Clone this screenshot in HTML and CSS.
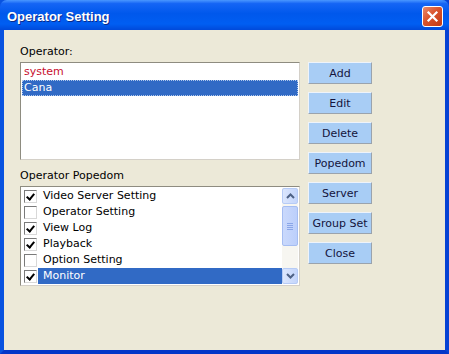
FILE: index.html
```html
<!DOCTYPE html>
<html lang="en">
<head>
    <meta charset="UTF-8">
    <title>Operator Setting</title>
    <link rel="stylesheet" href="styles.css">
</head>
<body>
    <div class="window">
        <div class="titlebar">
            <span class="title">Operator Setting</span>
            <span class="close-btn">
                <svg width="13" height="13" viewBox="0 0 13 13">
                    <path d="M2.5 2.5 L10.5 10.5 M10.5 2.5 L2.5 10.5" stroke="#fff" stroke-width="2.2" stroke-linecap="square"/>
                </svg>
            </span>
        </div>

        <div class="client">
            <div class="left-col">
                <div class="label">Operator:</div>
                <div class="listbox users">
                    <div class="row red">system</div>
                    <div class="row selected"><span>Cana</span></div>
                </div>

                <div class="label popedom-label">Operator Popedom</div>
                <div class="listbox perms">
                    <div class="rows">
                        <div class="row"><span class="check on"></span><span class="txt">Video Server Setting</span></div>
                        <div class="row"><span class="check"></span><span class="txt">Operator Setting</span></div>
                        <div class="row"><span class="check on"></span><span class="txt">View Log</span></div>
                        <div class="row"><span class="check on"></span><span class="txt">Playback</span></div>
                        <div class="row"><span class="check"></span><span class="txt">Option Setting</span></div>
                        <div class="row"><span class="check on"></span><span class="txt hl">Monitor</span></div>
                    </div>
                    <div class="scrollbar">
                        <div class="sb-btn">
                            <svg width="9" height="6" viewBox="0 0 9 6"><path d="M1 5 L4.5 1.5 L8 5" fill="none" stroke="#4d6185" stroke-width="2"/></svg>
                        </div>
                        <div class="sb-thumb">
                            <span></span><span></span><span></span><span></span>
                        </div>
                        <div class="sb-track"></div>
                        <div class="sb-btn">
                            <svg width="9" height="6" viewBox="0 0 9 6"><path d="M1 1 L4.5 4.5 L8 1" fill="none" stroke="#4d6185" stroke-width="2"/></svg>
                        </div>
                    </div>
                </div>
            </div>

            <div class="buttons">
                <button>Add</button>
                <button>Edit</button>
                <button>Delete</button>
                <button>Popedom</button>
                <button>Server</button>
                <button>Group Set</button>
                <button>Close</button>
            </div>
        </div>
    </div>
</body>
</html>
```

FILE: styles.css
```css
html, body {
    margin: 0;
    padding: 0;
}
body {
    width: 449px;
    height: 354px;
    overflow: hidden;
    font-family: "DejaVu Sans", "Liberation Sans", sans-serif;
    font-size: 11px;
}
.window {
    width: 449px;
    height: 354px;
    box-sizing: border-box;
    display: flex;
    flex-direction: column;
    background: #0a4fe0;
    border-left: 4px solid #0852e0;
    border-right: 4px solid #0642d4;
    border-bottom: 4px solid #0336c8;
}
.titlebar {
    height: 30px;
    margin: 0 -4px;
    padding: 0 6px 0 7px;
    display: flex;
    align-items: center;
    justify-content: space-between;
    background: linear-gradient(to bottom, #4a97ff 0, #1565f5 12%, #0058ec 45%, #005ef2 80%, #0049da 100%);
    border-radius: 7px 7px 0 0;
}
.title {
    color: #fff;
    font-family: "Liberation Sans", sans-serif;
    font-weight: bold;
    font-size: 13px;
    text-shadow: 1px 1px 0 #0a2a8a;
    margin-top: 2px;
}
.close-btn {
    width: 19px;
    height: 19px;
    margin-top: 2px;
    display: flex;
    align-items: center;
    justify-content: center;
    border: 1px solid #fff;
    border-radius: 3px;
    background: linear-gradient(135deg, #e98a6c 0, #d9532c 45%, #c33a14 100%);
}
.client {
    flex: 1;
    background: #ece9d8;
    display: flex;
    padding: 14px 0 0 16px;
    gap: 8px;
}
.left-col {
    width: 280px;
    display: flex;
    flex-direction: column;
}
.label {
    height: 16px;
    line-height: 16px;
    margin-bottom: 2px;
    color: #000;
}
.popedom-label {
    margin-top: 8px;
}
.listbox {
    box-sizing: border-box;
    background: #fff;
    border: 1px solid #8e8c80;
    border-right-color: #d4d0c8;
    border-bottom-color: #d4d0c8;
    padding: 1px;
}
.users {
    height: 98px;
}
.perms {
    height: 100px;
    display: flex;
}
.row {
    height: 16px;
    line-height: 16px;
    display: flex;
    align-items: center;
    color: #000;
    white-space: nowrap;
}
.users .row {
    padding-left: 2px;
}
.row.red {
    color: #c8102e;
}
.row.selected {
    background: #316ac5;
    color: #fff;
    outline: 1px dotted #b0c8ec;
    outline-offset: -1px;
}
.rows {
    flex: 1;
}
.check {
    box-sizing: border-box;
    width: 13px;
    height: 13px;
    margin: 0 1px 0 2px;
    border: 1px solid;
    border-color: #7a7a7a #d8d8d8 #d8d8d8 #7a7a7a;
    background: #fff;
    flex-shrink: 0;
    position: relative;
}
.check.on::after {
    content: "";
    position: absolute;
    left: 3px;
    top: 1px;
    width: 3px;
    height: 6px;
    border: solid #000;
    border-width: 0 2px 2px 0;
    transform: rotate(40deg);
}
.txt {
    padding-left: 5px;
    height: 16px;
    line-height: 16px;
    flex: 1;
}
.txt.hl {
    background: #316ac5;
    color: #fff;
}
.scrollbar {
    width: 16px;
    display: flex;
    flex-direction: column;
    background: #f7f6f1;
}
.sb-btn {
    box-sizing: border-box;
    height: 16px;
    display: flex;
    align-items: center;
    justify-content: center;
    background: linear-gradient(to right, #dbe6fd, #c4d5fb);
    border: 1px solid #b6cbf6;
    border-radius: 2px;
}
.sb-thumb {
    box-sizing: border-box;
    height: 40px;
    margin-top: 2px;
    display: flex;
    flex-direction: column;
    align-items: center;
    justify-content: center;
    gap: 1px;
    background: linear-gradient(to right, #cad9fc, #bccffb);
    border: 1px solid #a5bdf2;
    border-radius: 2px;
}
.sb-thumb span {
    width: 6px;
    height: 1px;
    background: #8aa6e8;
}
.sb-track {
    flex: 1;
}
.buttons {
    padding-top: 18px;
    display: flex;
    flex-direction: column;
    gap: 8px;
}
button {
    box-sizing: border-box;
    width: 64px;
    height: 22px;
    padding: 0;
    font-family: "DejaVu Sans", "Liberation Sans", sans-serif;
    font-size: 11px;
    color: #14143c;
    background: #a8cdf5;
    border: 1px solid;
    border-color: #eef3fa #9aa3ad #9aa3ad #eef3fa;
    border-radius: 0;
}
```
